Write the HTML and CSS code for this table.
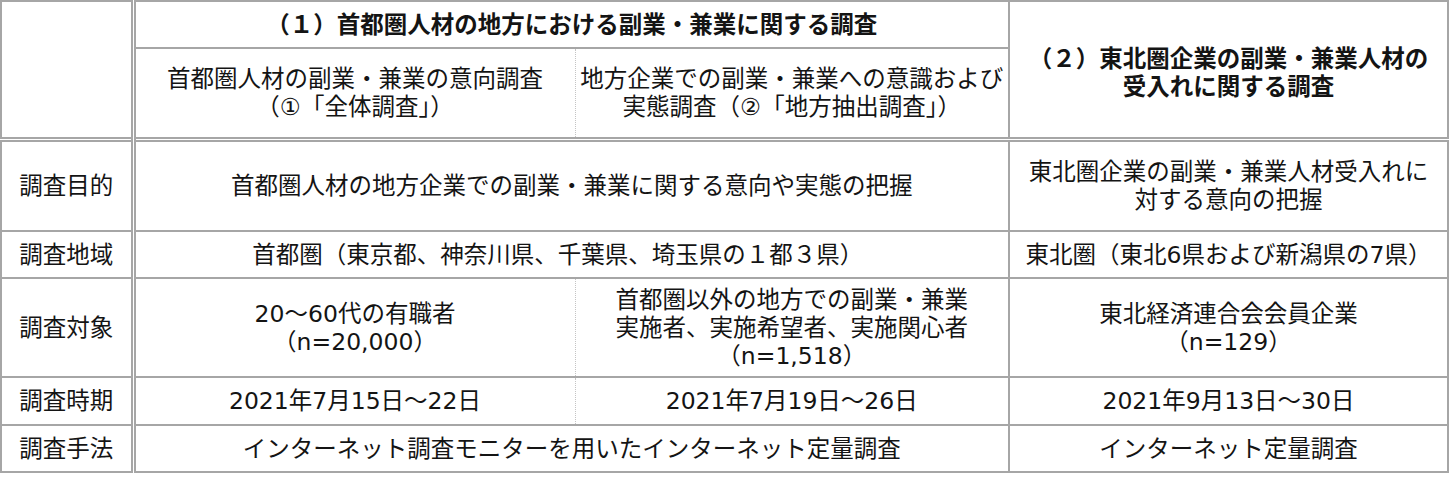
FILE: index.html
```html
<!DOCTYPE html>
<html lang="ja">
<head>
<meta charset="utf-8">
<title>調査概要</title>
<link rel="stylesheet" href="styles.css">
</head>
<body>
<table class="survey">
  <colgroup>
    <col class="c0"><col class="c1"><col class="c2"><col class="c3">
  </colgroup>
  <tr class="rh1">
    <td class="corner" rowspan="2"></td>
    <th class="head" colspan="2">（１）首都圏人材の地方における副業・兼業に関する調査</th>
    <th class="head head2" rowspan="2">（２）東北圏企業の副業・兼業人材の<br>受入れに関する調査</th>
  </tr>
  <tr class="rh2">
    <td class="a">首都圏人材の副業・兼業の意向調査<br>（①「全体調査」）</td>
    <td class="b">地方企業での副業・兼業への意識および<br>実態調査（②「地方抽出調査」）</td>
  </tr>
  <tr class="r1 first">
    <th class="label">調査目的</th>
    <td colspan="2">首都圏人材の地方企業での副業・兼業に関する意向や実態の把握</td>
    <td>東北圏企業の副業・兼業人材受入れに<br>対する意向の把握</td>
  </tr>
  <tr class="r2">
    <th class="label">調査地域</th>
    <td colspan="2" class="shift">首都圏（東京都、神奈川県、千葉県、埼玉県の１都３県）</td>
    <td>東北圏（東北6県および新潟県の7県）</td>
  </tr>
  <tr class="r3">
    <th class="label">調査対象</th>
    <td class="a">20～60代の有職者<br>（n=20,000）</td>
    <td class="b">首都圏以外の地方での副業・兼業<br>実施者、実施希望者、実施関心者<br>（n=1,518）</td>
    <td>東北経済連合会会員企業<br>（n=129）</td>
  </tr>
  <tr class="r4">
    <th class="label">調査時期</th>
    <td class="a">2021年7月15日～22日</td>
    <td class="b">2021年7月19日～26日</td>
    <td>2021年9月13日～30日</td>
  </tr>
  <tr class="r5">
    <th class="label">調査手法</th>
    <td colspan="2">インターネット調査モニターを用いたインターネット定量調査</td>
    <td>インターネット定量調査</td>
  </tr>
</table>
</body>
</html>
```

FILE: styles.css
```css
body {
  margin: 0;
  background: #ffffff;
  color: #141414;
  font-family: "DejaVu Sans", "Noto Sans CJK JP", sans-serif;
}

.survey {
  border-collapse: collapse;
  table-layout: fixed;
  width: 1449px;
  font-size: 23.5px;
  line-height: 28px;
}

.c0 { width: 132px; }
.c1 { width: 442px; }
.c2 { width: 434px; }
.c3 { width: 439px; }

.survey td,
.survey th {
  border: 2px solid #a6a6a6;
  padding: 0 2px;
  text-align: center;
  vertical-align: middle;
  font-weight: 400;
  white-space: nowrap;
}

.survey .head {
  font-weight: 700;
}

.survey .head2 {
  padding-top: 8px;
}

.survey .corner,
.survey .label {
  border-right: 5px double #a6a6a6;
}

.survey .first > td,
.survey .first > th {
  border-top: 5px double #a6a6a6;
}

.survey .a {
  border-right: 1px dotted #c4c4c4;
}

.survey .b {
  border-left: 1px dotted #c4c4c4;
}

.survey .shift {
  padding-right: 30px;
}

.rh1 { height: 47px; }
.rh2 { height: 91px; }
.r1 { height: 92px; }
.r2 { height: 47px; }
.r3 { height: 99px; }
.r4 { height: 48px; }
.r5 { height: 47px; }
```
